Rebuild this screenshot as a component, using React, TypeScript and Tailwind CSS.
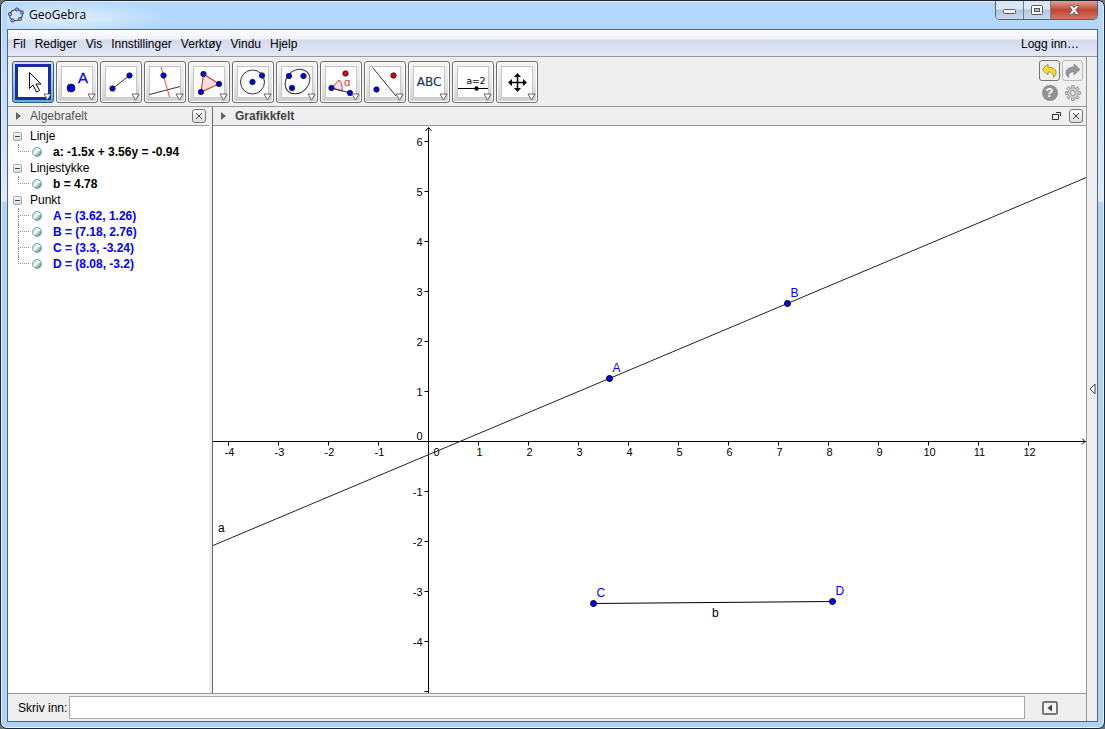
import React, { useState } from "react";

type AlgebraItem = { label: string; blue?: boolean };
type AlgebraGroup = { name: string; items: AlgebraItem[] };

const menuItems = ["Fil", "Rediger", "Vis", "Innstillinger", "Verktøy", "Vindu", "Hjelp"];

const groups: AlgebraGroup[] = [
  { name: "Linje", items: [{ label: "a: -1.5x + 3.56y = -0.94" }] },
  { name: "Linjestykke", items: [{ label: "b = 4.78" }] },
  {
    name: "Punkt",
    items: [
      { label: "A = (3.62, 1.26)", blue: true },
      { label: "B = (7.18, 2.76)", blue: true },
      { label: "C = (3.3, -3.24)", blue: true },
      { label: "D = (8.08, -3.2)", blue: true },
    ],
  },
];

const Dot = ({ x, y, r = 2.7, fill = "#0000f0" }: { x: number; y: number; r?: number; fill?: string }) => (
  <circle cx={x} cy={y} r={r} fill={fill} stroke="#222" strokeWidth="0.9" />
);

// Tool icons, each drawn on a 32x32 board
const tools: { name: string; icon: React.ReactNode }[] = [
  {
    name: "Flytt",
    icon: (
      <path
        d="M12.5 6.5v16l3.500-3.500 3.500 7 3-1.500-3.500-6.500h5z"
        fill="#fff"
        stroke="#000"
        strokeWidth="1"
      />
    ),
  },
  {
    name: "Punkt",
    icon: (
      <>
        <Dot x={10} y={22} r={4} />
        <text x="17" y="17" fontSize="15" fill="#0000ff" stroke="#0000ff" strokeWidth="0.300">A</text>
      </>
    ),
  },
  {
    name: "Linjestykke",
    icon: (
      <>
        <path d="M7.5 22.500L24.500 9.500" stroke="#333" />
        <Dot x={7.5} y={22.5} />
        <Dot x={24.5} y={9.5} />
      </>
    ),
  },
  {
    name: "Normal",
    icon: (
      <>
        <path d="M0.500 28.500L31 20.500" stroke="#333" />
        <path d="M12 1L20.500 31" stroke="#ff4040" />
        <Dot x={14.5} y={9.5} />
      </>
    ),
  },
  {
    name: "Mangekant",
    icon: (
      <>
        <path d="M10.500 8L26 18 8 26z" fill="#fbdede" stroke="#e03030" strokeWidth="1.100" />
        <Dot x={10.5} y={8} />
        <Dot x={26} y={18} />
        <Dot x={8} y={26} />
      </>
    ),
  },
  {
    name: "Sirkel",
    icon: (
      <>
        <circle cx="15.500" cy="16" r="12" fill="#f9fcf9" stroke="#333" />
        <Dot x={15.5} y={16} />
        <Dot x={25} y={9.500} />
      </>
    ),
  },
  {
    name: "Kjeglesnitt",
    icon: (
      <>
        <ellipse cx="16.500" cy="15.500" rx="13.500" ry="11" transform="rotate(-45 16.500 15.500)" fill="#f9fcf9" stroke="#333" />
        <Dot x={8} y={10} />
        <Dot x={22.5} y={10} />
        <Dot x={11} y={22} />
      </>
    ),
  },
  {
    name: "Vinkel",
    icon: (
      <>
        <path d="M6.500 22L14 14Q18 18 17 25z" fill="#fbdede" stroke="#e03030" />
        <path d="M6.500 22L25 27" stroke="#222" />
        <text x="19" y="20" fontSize="11" fill="#e03030">α</text>
        <Dot x={20.5} y={7.5} fill="#e60000" />
        <Dot x={6.5} y={22} />
        <Dot x={25} y={27} />
      </>
    ),
  },
  {
    name: "Speiling",
    icon: (
      <>
        <path d="M3.500 1.500L27 30" stroke="#333" />
        <Dot x={24.5} y={9.5} fill="#e60000" />
        <Dot x={7.5} y={23.5} />
      </>
    ),
  },
  {
    name: "Tekst",
    icon: (
      <text x="16" y="20" fontSize="12" textAnchor="middle" fill="#1d3557" stroke="#1d3557" strokeWidth="0.200" className="font-['DejaVu_Sans']">
        ABC
      </text>
    ),
  },
  {
    name: "Glider",
    icon: (
      <>
        <text x="19" y="18" fontSize="9" textAnchor="middle" fill="#111" stroke="#111" strokeWidth="0.200" className="font-['DejaVu_Sans']">
          a=2
        </text>
        <path d="M1 22.500H31" stroke="#000" />
        <circle cx="19.500" cy="22.500" r="2.200" />
      </>
    ),
  },
  {
    name: "Flytt grafikkfeltet",
    icon: (
      <>
        <path d="M16.500 9V24M9 16.500H24" stroke="#000" strokeWidth="1.500" />
        <path d="M16.500 7l3.500 4h-7zM16.500 26l3.500-4h-7zM7 16.500l4-3.500v7zM26 16.500l-4-3.500v7z" />
      </>
    ),
  },
];

const CloseButton = ({ label }: { label: string }) => (
  <button
    aria-label={label}
    className="flex h-[14px] w-[14px] items-center justify-center rounded-[3px] border border-[#777] bg-linear-to-b from-[#fafafa] to-[#dcdcdc]"
  >
    <svg width="8" height="8" viewBox="0 0 8 8">
      <path d="M1 1l6 6M7 1l-6 6" stroke="#444" strokeWidth="1" />
    </svg>
  </button>
);

const PanelArrow = () => (
  <svg width="5" height="8" viewBox="0 0 5 8">
    <path d="M0 0l5 4-5 4z" fill="#666" />
  </svg>
);

const TitleBar = () => (
  <header className="flex h-7 shrink-0 items-start justify-between">
    <div className="flex h-7 w-40 items-center gap-[5px] bg-radial-[at_35%_60%] from-[#dcedff] from-10% to-transparent to-70% pl-px">
      <svg width="16" height="16" viewBox="0 0 16 16">
        <ellipse cx="8" cy="8" rx="6.500" ry="5.500" transform="rotate(-15 8 8)" fill="none" stroke="#444" strokeWidth="1.100" />
        {[[9, 2.500], [14, 5.500], [12, 12], [4.500, 13.500], [2, 7]].map(([x, y]) => (
          <circle key={x} cx={x} cy={y} r="1.700" fill="#9999ff" stroke="#334" strokeWidth="0.700" />
        ))}
      </svg>
      <h1 className="font-['Open_Sans'] text-xs text-black">GeoGebra</h1>
    </div>
    <div className="flex h-[19px] overflow-hidden rounded-b-[5px] border border-t-0 border-[#55637a]">
      <button aria-label="Minimer" className="flex w-7 items-center justify-center border-r border-[#6d7c92] bg-linear-to-b from-[#dbe7f4] from-45% via-[#b3c6de] via-50% to-[#c8daee]">
        <svg width="13" height="6" viewBox="0 0 13 6" className="mt-1">
          <rect x="0.500" y="0.500" width="12" height="4" rx="1" fill="#fff" stroke="#555a6b" />
        </svg>
      </button>
      <button aria-label="Maksimer" className="flex w-[27px] items-center justify-center border-r border-[#6d7c92] bg-linear-to-b from-[#dbe7f4] from-45% via-[#b3c6de] via-50% to-[#c8daee]">
        <svg width="12" height="10" viewBox="0 0 12 10">
          <rect x="0.500" y="0.500" width="11" height="9" rx="1" fill="#fff" stroke="#555a6b" />
          <rect x="3.500" y="3.500" width="5" height="3" fill="#a9c1dd" stroke="#555a6b" />
        </svg>
      </button>
      <button aria-label="Lukk" className="flex w-[46px] items-center justify-center bg-linear-to-b from-[#e0a297] via-[#bd4630] via-50% to-[#d5755f]">
        <svg width="12" height="10" viewBox="0 0 12 10">
          <path d="M1 .5h3l2 2.300 2-2.300h3L7.800 5 11 9.500H8L6 7.200 4 9.500H1L4.200 5z" fill="#fff" stroke="#555a6b" strokeWidth="0.800" />
        </svg>
      </button>
    </div>
  </header>
);

const MenuBar = () => (
  <nav className="flex h-[27px] shrink-0 items-center justify-between border-b border-[#999] bg-[linear-gradient(#fff,#eef1f8_36%,#d3daed_37%,#e4e9f7)] pt-px pr-[18px] pl-[5px]">
    <div className="flex gap-[9px]">
      {menuItems.map((item) => (
        <button key={item}>{item}</button>
      ))}
    </div>
    <button>Logg inn…</button>
  </nav>
);

const Toolbar = () => {
  const [selected, setSelected] = useState("Flytt");

  return (
    <div className="flex h-[50px] shrink-0 items-start justify-between border-b border-[#999] pt-1 pr-[3px] pl-1">
      <div className="flex gap-[2px]">
        {tools.map((tool) => (
          <button
            key={tool.name}
            aria-label={tool.name}
            onClick={() => setSelected(tool.name)}
            className={`relative flex h-[42px] w-[42px] items-center justify-center rounded-[3px] border ${
              selected === tool.name
                ? "border-[#2f5d7c] bg-linear-to-b from-[#cfe6f4] to-[#5fb0da]"
                : "border-[#707070] bg-linear-to-b from-[#f4f4f4] via-[#e8e8e8] via-50% to-[#cfcfcf] shadow-[inset_0_0_0_1px_#fff]"
            }`}
          >
            <span
              className={`flex h-9 w-9 items-center justify-center overflow-hidden ${
                selected === tool.name ? "border-[3px] border-[#1c2ba0] bg-white" : ""
              }`}
            >
              <svg width="32" height="32" viewBox="0 0 32 32" fill="none" className="shrink-0">
                <rect x="0.500" y="0.500" width="31" height="31" fill="#fff" stroke={selected === tool.name ? "#fff" : "#c4c4c4"} />
                <g fill="#000">{tool.icon}</g>
              </svg>
            </span>
            <svg width="9" height="8" viewBox="0 0 9 8" className="absolute right-px bottom-px">
              <path d="M1 1h7L4.500 7z" fill="#fff" stroke="#555" strokeWidth="0.900" />
            </svg>
          </button>
        ))}
      </div>
      <div className="-mt-px grid grid-cols-2 justify-items-center gap-x-[2px] gap-y-px">
        <button aria-label="Angre" className="flex h-[21px] w-[21px] items-center justify-center rounded-[3px] border border-[#777] bg-[#eee]">
          <svg width="17" height="17" viewBox="0 0 17 17">
            <path d="M7 2L1 7.500 7 13V10c4-.3 5.500 1.500 5.500 5.500 4-3.500 4-10-5.500-10.500z" fill="#f5d93a" stroke="#a8871a" strokeWidth="0.800" />
          </svg>
        </button>
        <button aria-label="Gjør om" className="flex h-[21px] w-[21px] items-center justify-center rounded-[3px] border border-[#bbb] bg-[#f0f0f0]">
          <svg width="17" height="17" viewBox="0 0 17 17">
            <path d="M10 2l6 5.500L10 13V10c-4-.3-5.500 1.500-5.500 5.500C.5 12 .5 5.500 10 5z" fill="#969696" stroke="#858585" strokeWidth="0.800" />
          </svg>
        </button>
        <button aria-label="Hjelp" className="flex h-[21px] w-[21px] items-center justify-center">
          <span className="flex h-4 w-4 items-center justify-center rounded-full bg-[#929292] text-[13px] leading-4 font-bold text-white">?</span>
        </button>
        <button aria-label="Innstillinger" className="flex h-[21px] w-[21px] items-center justify-center">
          <svg width="16" height="16" viewBox="0 0 16 16">
            {[0, 45, 90, 135, 180, 225, 270, 315].map((angle) => (
              <rect key={angle} x="6.500" y="0.500" width="3" height="4" rx="0.500" fill="#ccc" stroke="#888" strokeWidth="0.700" transform={`rotate(${angle} 8 8)`} />
            ))}
            <circle cx="8" cy="8" r="5.200" fill="#ccc" stroke="#999" strokeWidth="0.600" />
            <circle cx="8" cy="8" r="2.500" fill="#eee" stroke="#808080" strokeWidth="0.800" />
          </svg>
        </button>
      </div>
    </div>
  );
};

const AlgebraPanel = () => (
  <section className="flex w-[201px] shrink-0 flex-col bg-white">
    <div className="flex h-[19px] shrink-0 items-center justify-between border-b border-[#999] bg-[#efefef] pr-[3px] pl-2">
      <h2 className="flex items-center gap-[9px] text-[#555]">
        <PanelArrow />
        Algebrafelt
      </h2>
      <CloseButton label="Lukk Algebrafelt" />
    </div>
    <ul className="pt-[2px] pl-[5px] leading-4">
      {groups.map((group) => (
        <li key={group.name}>
          <div className="flex h-4 items-center gap-2">
            <button aria-label={`Skjul ${group.name}`} className="flex h-[9px] w-[9px] items-center justify-center rounded-[2px] border border-[#aaa] bg-linear-to-b from-[#fafafa] to-[#d8d8d8]">
              <span className="h-px w-[5px] bg-[#444]" />
            </button>
            {group.name}
          </div>
          <ul>
            {group.items.map((item, i) => (
              <li key={item.label} className="flex h-4 items-center pl-[5px]">
                <span className="flex h-4 w-[11px] flex-col">
                  <span className="h-2 border-b border-l border-dotted border-[#888]" />
                  {i < group.items.length - 1 && <span className="h-2 border-l border-dotted border-[#888]" />}
                </span>
                <span className="ml-[3px] h-[10px] w-[10px] rounded-full border border-[#7f9f9f] bg-linear-to-br from-[#b9d0c4] via-[#f4faee] via-45% to-[#1f6a88]" />
                <span className={`ml-[11px] font-bold ${item.blue ? "text-[#0000ff]" : "text-black"}`}>{item.label}</span>
              </li>
            ))}
          </ul>
        </li>
      ))}
    </ul>
  </section>
);

// Coordinate system: 50px per unit, origin inside the drawing
const UNIT = 50;
const OX = 215.5;
const OY = 315.5;
const px = (x: number) => OX + x * UNIT;
const py = (y: number) => OY - y * UNIT;
const lineY = (x: number) => (1.5 * x - 0.94) / 3.56;

const xTicks = [-4, -3, -2, -1, 1, 2, 3, 4, 5, 6, 7, 8, 9, 10, 11, 12];
const yTicks = [-5, -4, -3, -2, -1, 1, 2, 3, 4, 5, 6];

const points = [
  { name: "A", x: 3.62, y: 1.26 },
  { name: "B", x: 7.18, y: 2.76 },
  { name: "C", x: 3.3, y: -3.24 },
  { name: "D", x: 8.08, y: -3.2 },
];

const Graph = () => (
  <div className="relative min-h-0 flex-1 overflow-hidden bg-white">
    <svg className="absolute inset-0 h-full w-full" role="img" aria-label="Grafikkfelt">
      <g stroke="#000" fill="none">
        <line x1="0" y1={OY} x2="100%" y2={OY} />
        <line x1={OX} y1="2" x2={OX} y2="100%" />
        <path d={`M${OX - 3} 5l3-3.500 3 3.500`} />
        {xTicks.map((t) => (
          <line key={t} x1={px(t)} y1={OY} x2={px(t)} y2={OY + 4} />
        ))}
        {yTicks.map((t) => (
          <line key={t} x1={OX - 4} y1={py(t)} x2={OX} y2={py(t)} />
        ))}
      </g>
      <svg x="100%" y={OY} className="overflow-visible">
        <path d="M-4-3l3 3-3 3" stroke="#000" fill="none" />
      </svg>
      <g fontSize="11" fill="#000">
        {xTicks.map((t) => (
          <text key={t} x={px(t) + 1} y={OY + 14} textAnchor="middle">{t}</text>
        ))}
        {yTicks.slice(1).map((t) => (
          <text key={t} x={OX - 6} y={py(t) + 4} textAnchor="end">{t}</text>
        ))}
        <text x={OX - 6} y={OY - 2} textAnchor="end">0</text>
        <text x={OX + 5} y={OY + 14}>0</text>
      </g>
      <line x1={px(-5)} y1={py(lineY(-5))} x2={px(40)} y2={py(lineY(40))} stroke="#222" />
      <line x1={px(3.3)} y1={py(-3.24)} x2={px(8.08)} y2={py(-3.2)} stroke="#000" />
      <g fontSize="12">
        {points.map((p) => (
          <g key={p.name}>
            <circle cx={px(p.x)} cy={py(p.y)} r="3" fill="#0000ff" stroke="#000" />
            <text x={px(p.x) + 3} y={py(p.y) - 7} fill="#0000ff">{p.name}</text>
          </g>
        ))}
        <text x="5" y="406">a</text>
        <text x="499" y="491">b</text>
      </g>
    </svg>
  </div>
);

const GraphicsPanel = () => (
  <section className="flex min-w-0 flex-1 flex-col border-l border-[#666]">
    <div className="flex h-[19px] shrink-0 items-center justify-between border-b border-[#999] bg-[#efefef] pr-[3px] pl-2">
      <h2 className="flex items-center gap-[9px] font-bold text-[#444]">
        <PanelArrow />
        Grafikkfelt
      </h2>
      <div className="flex items-center gap-2">
        <button aria-label="Vis i eget vindu">
          <svg width="9" height="8" viewBox="0 0 9 8" fill="none" stroke="#333">
            <path d="M.5 2.500h6v5h-6zM4 .5h4.500V4" />
          </svg>
        </button>
        <CloseButton label="Lukk Grafikkfelt" />
      </div>
    </div>
    <Graph />
  </section>
);

const InputBar = () => (
  <form className="flex h-7 shrink-0 items-center border-t border-[#999] pl-[10px]" onSubmit={(e) => e.preventDefault()}>
    <label htmlFor="command">Skriv inn:</label>
    <input id="command" type="text" className="ml-[2px] h-[23px] min-w-0 flex-1 border border-[#a5a5af] bg-white px-1 outline-none" />
    <button type="button" aria-label="Inntastingshjelp" className="mr-7 ml-[17px]">
      <svg width="16" height="14" viewBox="0 0 16 14">
        <rect x="1" y="1" width="14" height="12" rx="1.500" fill="#f4f4f4" stroke="#777" strokeWidth="2" />
        <path d="M10 3.500v7L5.500 7z" fill="#444" />
      </svg>
    </button>
  </form>
);

const App = () => {
  return (
    <div className="h-screen bg-[#6b7378] font-['Liberation_Sans',Arial,sans-serif] text-xs text-black">
      <div className="flex h-full flex-col rounded-[7px] border border-[#1c2733] bg-[linear-gradient(#b4d8fc_30px,#dceafb_200px,#b0d2f6_202px)] px-[6px] pb-[6px] shadow-[inset_0_0_0_1px_#e6f3ff]">
        <TitleBar />
        <div className="flex min-h-0 flex-1 flex-col border border-[#56657a] bg-[#efefef]">
          <MenuBar />
          <div className="flex min-h-0 flex-1">
            <main className="flex min-w-0 flex-1 flex-col">
              <Toolbar />
              <div className="flex min-h-0 flex-1">
                <AlgebraPanel />
                <div className="w-[3px] shrink-0" />
                <GraphicsPanel />
              </div>
              <InputBar />
            </main>
            <aside className="flex w-[11px] shrink-0 items-center justify-center border-l border-[#999]">
              <button aria-label="Vis sidefelt">
                <svg width="7" height="12" viewBox="0 0 7 12">
                  <path d="M6 1v10L1 6z" fill="#fff" stroke="#444" />
                </svg>
              </button>
            </aside>
          </div>
        </div>
      </div>
    </div>
  );
};

export default App;
